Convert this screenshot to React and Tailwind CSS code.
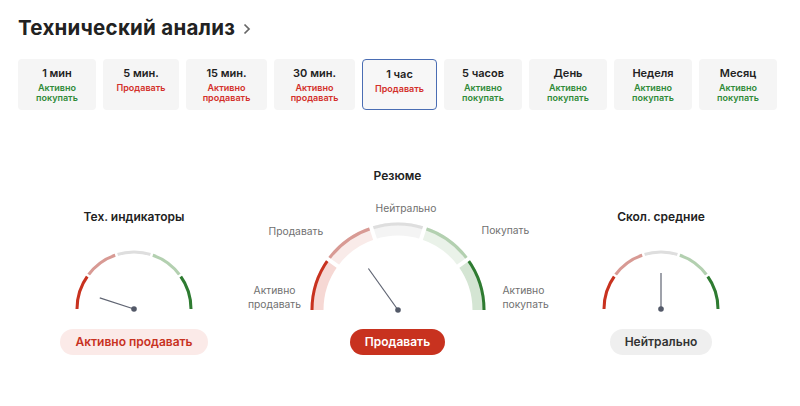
import React from 'react';

const TABS = [
  { label: '1 мин', status: 'Активно покупать', tone: 'buy' },
  { label: '5 мин.', status: 'Продавать', tone: 'sell' },
  { label: '15 мин.', status: 'Активно продавать', tone: 'sell' },
  { label: '30 мин.', status: 'Активно продавать', tone: 'sell' },
  { label: '1 час', status: 'Продавать', tone: 'sell', active: true },
  { label: '5 часов', status: 'Активно покупать', tone: 'buy' },
  { label: 'День', status: 'Активно покупать', tone: 'buy' },
  { label: 'Неделя', status: 'Активно покупать', tone: 'buy' },
  { label: 'Месяц', status: 'Активно покупать', tone: 'buy' },
];

const SEGMENTS = [
  { from: 180, to: 144, stroke: '#c8321f', fill: '#f6d8d4' },
  { from: 144, to: 108, stroke: '#d89a94', fill: '#f9ebe9' },
  { from: 108, to: 72, stroke: '#dedede', fill: '#f4f4f4' },
  { from: 72, to: 36, stroke: '#b3d0b0', fill: '#eaf2e9' },
  { from: 36, to: 0, stroke: '#2e7b31', fill: '#d4e5d3' },
];

// point on circle, angle in degrees measured from +x, counter-clockwise
const pt = (cx, cy, r, deg) => {
  const a = (deg * Math.PI) / 180;
  return [cx + r * Math.cos(a), cy - r * Math.sin(a)];
};

const arc = (cx, cy, r, a1, a2) => {
  const [x1, y1] = pt(cx, cy, r, a1);
  const [x2, y2] = pt(cx, cy, r, a2);
  return `M${x1} ${y1} A${r} ${r} 0 0 1 ${x2} ${y2}`;
};

const sector = (cx, cy, ri, ro, a1, a2) => {
  const [ox1, oy1] = pt(cx, cy, ro, a1);
  const [ox2, oy2] = pt(cx, cy, ro, a2);
  const [ix2, iy2] = pt(cx, cy, ri, a2);
  const [ix1, iy1] = pt(cx, cy, ri, a1);
  return `M${ox1} ${oy1} A${ro} ${ro} 0 0 1 ${ox2} ${oy2} L${ix2} ${iy2} A${ri} ${ri} 0 0 0 ${ix1} ${iy1} Z`;
};

function Needle({ cx, cy, angle, length }) {
  const [x, y] = pt(cx, cy, length, angle);
  return (
    <>
      <line x1={cx} y1={cy} x2={x} y2={y} stroke="#5f6472" strokeWidth="1.2" />
      <circle cx={cx} cy={cy} r="2.8" fill="#535968" />
    </>
  );
}

function SmallGauge({ angle }) {
  const cx = 65, cy = 63, r = 57;
  return (
    <svg width="130" height="66" viewBox="0 0 130 66">
      {SEGMENTS.map((s, i) => (
        <path key={i} d={arc(cx, cy, r, s.from, s.to)} stroke={s.stroke} strokeWidth="3" fill="none" />
      ))}
      {[144, 108, 72, 36].map((a) => {
        const [x1, y1] = pt(cx, cy, r - 4, a);
        const [x2, y2] = pt(cx, cy, r + 4, a);
        return <line key={a} x1={x1} y1={y1} x2={x2} y2={y2} stroke="#fff" strokeWidth="2.5" />;
      })}
      <Needle cx={cx} cy={cy} angle={angle} length={36} />
    </svg>
  );
}

function BigGauge({ angle }) {
  const cx = 150, cy = 111, ri = 74.5, ro = 87.5;
  return (
    <svg className="absolute inset-0" width="300" height="114" viewBox="0 0 300 114">
      {SEGMENTS.map((s, i) => (
        <g key={i}>
          <path d={sector(cx, cy, ri, ro, s.from, s.to)} fill={s.fill} />
          <path d={arc(cx, cy, 86, s.from, s.to)} stroke={s.stroke} strokeWidth="3" fill="none" />
        </g>
      ))}
      {[144, 108, 72, 36].map((a) => {
        const [x1, y1] = pt(cx, cy, ri - 3, a);
        const [x2, y2] = pt(cx, cy, ro + 3, a);
        return <line key={a} x1={x1} y1={y1} x2={x2} y2={y2} stroke="#fff" strokeWidth="4" />;
      })}
      <Needle cx={cx} cy={cy} angle={angle} length={51} />
    </svg>
  );
}

export default function App() {
  return (
    <div className="w-[800px] h-[406px] bg-white px-[18px] pt-[14px] text-[#222]" style={{ fontFamily: 'Inter, "Noto Sans", sans-serif' }}>
      <div className="flex items-center h-[28px]">
        <h1 className="text-[20.5px] leading-[28px] font-bold text-[#222] tracking-[0.25px]">Технический анализ</h1>
        <svg className="ml-[8px] mt-[1px]" width="8" height="12" viewBox="0 0 8 12">
          <path d="M1.5 1.5 6 6l-4.5 4.5" stroke="#666" strokeWidth="1.7" fill="none" />
        </svg>
      </div>

      <div className="mt-[17px] grid grid-cols-[78px_76px_81px_81px_75px_78px_78px_78px_78px] gap-[7px]">
        {TABS.map((t) => (
          <div
            key={t.label}
            className={`h-[51px] rounded-[4px] flex flex-col items-center pt-[7px] text-center ${
              t.active ? 'bg-[#f7f7f7] border border-[#4a6db3] pt-[6px]' : 'bg-[#f5f5f5]'
            }`}
          >
            <div className="text-[11px] leading-[14px] font-semibold text-[#222]">{t.label}</div>
            <div
              className={`mt-[2.5px] text-[9px] leading-[10.6px] font-semibold ${
                t.tone === 'buy' ? 'text-[#2f8a37]' : 'text-[#d3302a]'
              } ${t.status.length > 9 ? 'w-[52px]' : ''}`}
            >
              {t.status}
            </div>
          </div>
        ))}
      </div>

      <div className="mt-[57px] grid w-[759px] grid-cols-[232px_295px_232px] items-end">
        <div className="flex flex-col items-center">
          <div className="text-[12px] leading-[18px] font-semibold text-[#222]">Тех. индикаторы</div>
          <div className="mt-[20px]">
            <SmallGauge angle={162} />
          </div>
          <div className="mt-[17px] h-[26px] px-[15px] rounded-full bg-[#fbeae8] text-[#c8321f] text-[12px] font-semibold flex items-center">
            Активно продавать
          </div>
        </div>

        <div className="flex flex-col items-center">
          <div className="text-[12px] leading-[18px] font-semibold text-[#222]">Резюме</div>
          <div className="relative mt-[14px] w-[300px] h-[114px] text-[10.3px] leading-[14px] text-[#707070]">
            <BigGauge angle={125.5} />
            <span className="absolute left-[128px] top-[2px]">Нейтрально</span>
            <span className="absolute left-[21px] top-[25px]">Продавать</span>
            <span className="absolute left-[234px] top-[24px]">Покупать</span>
            <span className="absolute left-0 top-[84px] w-[54px] text-center">Активно продавать</span>
            <span className="absolute left-[255px] top-[84px] w-[50px]">Активно покупать</span>
          </div>
          <div className="mt-[16px] h-[26px] px-[15px] rounded-full bg-[#c8321f] text-white text-[12px] font-semibold flex items-center">
            Продавать
          </div>
        </div>

        <div className="flex flex-col items-center">
          <div className="text-[12px] leading-[18px] font-semibold text-[#222]">Скол. средние</div>
          <div className="mt-[20px]">
            <SmallGauge angle={90} />
          </div>
          <div className="mt-[17px] h-[26px] px-[15px] rounded-full bg-[#efefef] text-[#333] text-[12px] font-semibold flex items-center">
            Нейтрально
          </div>
        </div>
      </div>
    </div>
  );
}
